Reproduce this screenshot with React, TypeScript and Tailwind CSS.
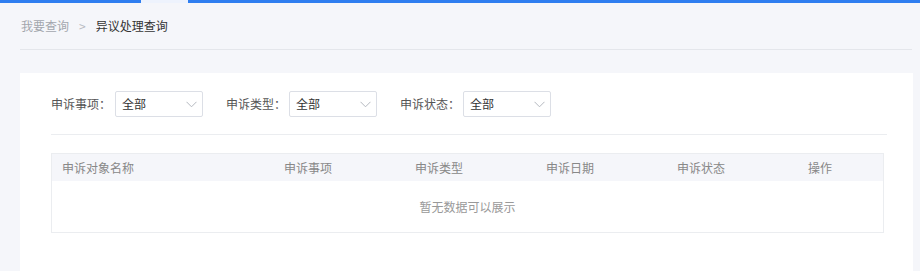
const filters = ['申诉事项', '申诉类型', '申诉状态']

const columns = [
  { title: '申诉对象名称', width: 'w-[222px]' },
  { title: '申诉事项', width: 'w-[131px]' },
  { title: '申诉类型', width: 'w-[131px]' },
  { title: '申诉日期', width: 'w-[131px]' },
  { title: '申诉状态', width: 'w-[131px]' },
  { title: '操作', width: 'flex-1' },
]

const Select = () => (
  <div className="flex h-[26px] w-[88px] items-center justify-between rounded-[2px] border border-[#dcdfe6] bg-white pl-[6px] pr-[5px]">
    <span className="text-[12px] text-[#333]">全部</span>
    <svg width="11" height="7" viewBox="0 0 11 7" fill="none" className="mt-px">
      <path d="M0.5 0.8 L5.5 5.8 L10.5 0.8" stroke="#b4b8bf" strokeWidth="1" />
    </svg>
  </div>
)

export default function App() {
  return (
    <div
      className="h-[271px] w-[920px] overflow-hidden bg-[#f5f6fa]"
      style={{ fontFamily: '"Noto Sans CJK SC", "Noto Sans", sans-serif' }}
    >
      {/* top bar */}
      <div className="flex h-[3px]">
        <div className="w-[141px] bg-[#2f7ef0]" />
        <div className="w-[47px] bg-[#eef3fd]" />
        <div className="flex-1 bg-[#2f7ef0]" />
      </div>

      {/* breadcrumb */}
      <div className="ml-[20px] mr-[8px] flex h-[47px] items-center border-b border-[#e4e6eb] pl-px text-[12px]">
        <span className="text-[#a3a6ad]">我要查询</span>
        <span className="mx-[10px] text-[#b8bbc2]">&gt;</span>
        <span className="text-[#333]">异议处理查询</span>
      </div>

      {/* card */}
      <div className="ml-[20px] mr-[7px] mt-[23px] h-[200px] bg-white pl-[31px] pr-[26px] pt-[18px]">
        <div className="flex items-center border-b border-[#ebedf0] pb-[17px]">
          {filters.map((label, i) => (
            <div key={label} className={`flex items-center ${i > 0 ? 'ml-[23px]' : ''}`}>
              <span className={`${i === 0 ? 'w-[64px]' : 'w-[63px]'} text-[12px] text-[#555]`}>{label}：</span>
              <Select />
            </div>
          ))}
        </div>

        <div className="mr-[3px] mt-[18px] border border-[#ebedf0]">
          <div className="flex h-[27px] items-center bg-[#f5f6fa] text-[12px] text-[#888]">
            {columns.map(col => (
              <div key={col.title} className={`${col.width} pl-[10px]`}>
                {col.title}
              </div>
            ))}
          </div>
          <div className="flex h-[51px] items-center justify-center text-[12px] text-[#999]">
            暂无数据可以展示
          </div>
        </div>
      </div>
    </div>
  )
}
